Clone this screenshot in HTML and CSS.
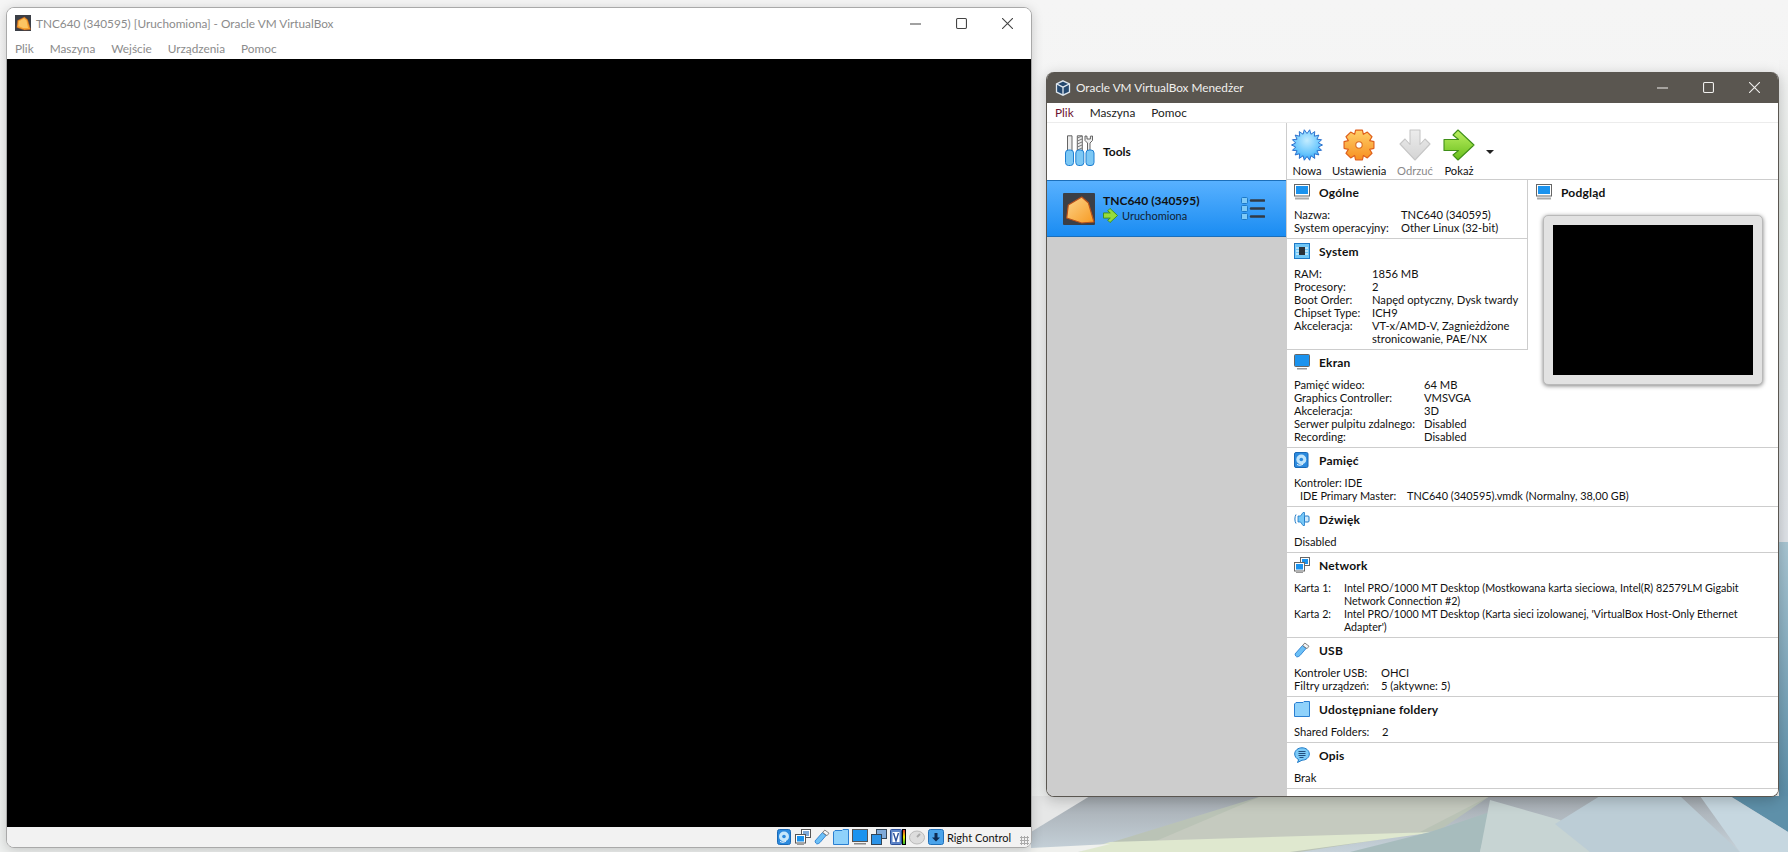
FILE: index.html
```html
<!DOCTYPE html>
<html lang="pl">
<head>
<meta charset="utf-8">
<title>Oracle VM VirtualBox</title>
<link rel="stylesheet" href="styles.css">
</head>
<body>
<svg class="wallpaper" viewBox="0 0 1788 852" aria-hidden="true">
  <defs>
    <linearGradient id="wp" x1="0" y1="0" x2="0" y2="1">
      <stop offset="0" stop-color="#f5f5f5"/><stop offset="1" stop-color="#eef0ef"/>
    </linearGradient>
    <linearGradient id="shade" x1="0" y1="0" x2="0" y2="1">
      <stop offset="0" stop-color="#a4aab0"/><stop offset="1" stop-color="#c6d2da"/>
    </linearGradient>
    <linearGradient id="teal" x1="0" y1="0" x2="0" y2="1">
      <stop offset="0" stop-color="#a9c6d3"/><stop offset="1" stop-color="#5b8ea8"/>
    </linearGradient>
    <linearGradient id="paleg" x1="0" y1="0" x2="0" y2="1">
      <stop offset="0" stop-color="#f3f3f3"/><stop offset=".3" stop-color="#e4eae6"/><stop offset="1" stop-color="#dfe3e8"/>
    </linearGradient>
  </defs>
  <rect width="1788" height="852" fill="url(#wp)"/>
  <rect x="1779" y="60" width="9" height="482" fill="url(#paleg)"/>
  <rect x="1779" y="542" width="9" height="258" fill="url(#teal)"/>
  <rect x="1031" y="796" width="757" height="56" fill="url(#shade)"/>
  <polygon points="1031,796 1090,796 1031,832" fill="#e6e7e7"/>
  <polygon points="1262,796 1490,796 1440,830 1300,852 1080,852" fill="#bac3b6"/>
  <polygon points="1262,796 1490,796 1420,832 1210,852 1130,852" fill="#c5cabf"/>
  <polygon points="1078,852 1110,842 1436,832 1290,852" fill="#dfe8cf"/>
  <polygon points="1031,852 1031,848 1110,844 1078,852" fill="#f0f1ee"/>
  <polygon points="1490,812 1480,852 1350,852 1430,832" fill="#a7bcbd"/>
  <polygon points="1490,800 1480,852 1590,852 1560,820" fill="#c7d4d3"/>
  <polygon points="1590,852 1555,824 1600,796 1680,796 1740,852" fill="#bccdd6"/>
  <polygon points="1730,796 1788,796 1788,832" fill="#5e90a9"/>
  <polygon points="1740,852 1700,796 1730,796 1788,832 1788,852" fill="#c6d7e0"/>
</svg>

<section class="window vm-window">
  <header class="titlebar">
    <svg class="title-icon" viewBox="0 0 32 32" aria-hidden="true"><rect width="32" height="32" fill="#3b3f46"/><path d="M3.700 25 5.300 11 18.700 4 25.300 9.700 31 29 18.700 30z" fill="#f6a12f" stroke="#b9501a"/><path d="M7 22 8 12.500 18 7 23 11 26 26 16 26z" fill="#fcc463"/></svg>
    <span class="title-text">TNC640 (340595) [Uruchomiona] - Oracle VM VirtualBox</span>
    <div class="window-controls dim">
      <svg viewBox="0 0 10 10" aria-hidden="true"><path d="M0 5.500h10"/></svg>
      <svg viewBox="0 0 10 10" aria-hidden="true"><rect x=".5" y=".5" width="9" height="9" rx="1"/></svg>
      <svg viewBox="0 0 10 10" aria-hidden="true"><path d="M0 0 10 10M10 0 0 10"/></svg>
    </div>
  </header>
  <nav class="menubar vm-menu">
    <span>Plik</span><span>Maszyna</span><span>Wejście</span><span>Urządzenia</span><span>Pomoc</span>
  </nav>
  <div class="guest-screen"></div>
  <footer class="statusbar">
    <svg class="st" viewBox="0 0 16 16"><rect x="1.500" y=".5" width="13" height="15" rx="2" fill="#2b8ade" stroke="#1a69b6"/><circle cx="8" cy="7.500" r="5" fill="#c6e7fb"/><circle cx="8" cy="7.500" r="1.800" fill="#2b8ade"/><path d="M4 12.500c2 1 4 1 6-.5" stroke="#fff" fill="none"/></svg>
    <svg class="st" viewBox="0 0 16 16"><rect x="6.500" y=".5" width="9" height="8" fill="#fff" stroke="#555"/><rect x="8" y="2" width="6" height="5" fill="#7fa9d8"/><rect x=".5" y="5.500" width="10" height="8.500" fill="#fff" stroke="#555"/><rect x="2" y="7" width="7" height="5.500" fill="#1b93ee"/><path d="M2 15.500h7" stroke="#999"/></svg>
    <svg class="st" viewBox="0 0 16 16"><path d="M1 12 8.500 3.500l3.500 3L6 13.500Q2 17 1 12z" fill="#6cc0f6" stroke="#2a7fd1" stroke-width=".9"/><path d="M10.800 1 15 4.200 13 6.700 8.700 3.500z" fill="#f4f4f4" stroke="#666" stroke-width=".8"/></svg>
    <svg class="st" viewBox="0 0 16 16"><path d="M.5 3 2 1.500h7L10 .5h5.500v15H.5z" fill="#8fd2fb" stroke="#2a7fd1"/></svg>
    <svg class="st" viewBox="0 0 16 16"><rect x=".5" y=".5" width="15" height="12" fill="#1b93ee" stroke="#555"/><path d="M2 14h12v1.500H2z" fill="#888"/></svg>
    <svg class="st" viewBox="0 0 16 16"><rect x="5.500" y=".5" width="10" height="9" fill="#7fa9d8" stroke="#345"/><rect x=".5" y="5.500" width="10" height="10" fill="#2a93e8" stroke="#345"/></svg>
    <span class="st-vbox">
      <svg class="st" viewBox="0 0 12 16"><rect x=".5" y=".5" width="11" height="15" rx="1" fill="#5d85c9" stroke="#2c4f9a"/><rect x="2.500" y="3" width="7" height="10" fill="#fff"/><path d="M3.500 4 6 12l2.500-8" fill="none" stroke="#2c4f9a" stroke-width="1.400"/></svg>
      <span class="meter"></span>
    </span>
    <svg class="st" viewBox="0 0 16 16"><ellipse cx="8" cy="8.500" rx="7.500" ry="6.500" fill="#ddd" stroke="#bbb"/><path d="m8 8 3-3" stroke="#aaa" stroke-width="2"/></svg>
    <svg class="st" viewBox="0 0 16 16"><rect x=".5" y=".5" width="15" height="15" rx="2" fill="#4aa3ea" stroke="#1f6fb8"/><path d="M8 12.500 4 8.500h2.500V4h3v4.500H12z" fill="#0d2a52"/></svg>
    <span class="host-key">Right Control</span>
    <span class="grip"></span>
  </footer>
</section>

<section class="window mgr-window">
  <header class="titlebar mgr-title">
    <svg class="mgr-logo" viewBox="0 0 16 16" aria-hidden="true"><path d="M8 .8 14.500 4v8L8 15.200 1.500 12V4z" fill="#24486f" stroke="#dfe7ee" stroke-width="1.300"/><path d="M1.800 4 8 7.200 14.200 4M8 7.200V15" fill="none" stroke="#dfe7ee" stroke-width="1.300"/></svg>
    <span class="title-text light">Oracle VM VirtualBox Menedżer</span>
    <div class="window-controls">
      <svg viewBox="0 0 10 10" aria-hidden="true"><path d="M0 5.500h10"/></svg>
      <svg viewBox="0 0 10 10" aria-hidden="true"><rect x=".5" y=".5" width="9" height="9" rx="1"/></svg>
      <svg viewBox="0 0 10 10" aria-hidden="true"><path d="M0 0 10 10M10 0 0 10"/></svg>
    </div>
  </header>
  <nav class="menubar mgr-menu">
    <span class="accent">Plik</span><span>Maszyna</span><span>Pomoc</span>
  </nav>
  <div class="mgr-body">
    <aside class="sidebar">
      <div class="tools-row">
        <svg class="tools-icon" viewBox="0 0 30 31" aria-hidden="true">
          <g fill="#ececec" stroke="#555" stroke-width=".9"><path d="M2.500.8h4.500v15H2.500z"/><path d="M12.300.8h5v15h-5z"/><path d="M22.500 15.500V8L20 5.500V1l2 .2V4h3.400V1.200L27.500 1v4.500L25 8v7.500z"/></g>
          <path d="M12.500 3l4.500-2M12.500 6l4.500-2M12.500 9l4.500-2M12.500 12l4.500-2M12.500 15l4.500-2" stroke="#777"/>
          <g fill="#7cc8f5" stroke="#1f7fd1"><rect x=".5" y="15" width="8" height="15.500" rx="3"/><rect x="10.800" y="15" width="8" height="15.500" rx="3"/><rect x="21" y="15" width="8" height="15.500" rx="3"/></g>
        </svg>
        <span class="tools-label">Tools</span>
      </div>
      <div class="vm-item">
        <svg class="vm-thumb" viewBox="0 0 32 32" aria-hidden="true"><defs><linearGradient id="blob" x1="0" y1="0" x2="1" y2="1"><stop offset="0" stop-color="#fdd48a"/><stop offset="1" stop-color="#f79a22"/></linearGradient></defs><rect width="32" height="32" rx="1" fill="#3b3f46"/><path d="M3.700 25 5.300 12 18.700 4 25.300 9.700 31 29 18.700 30z" fill="url(#blob)" stroke="#b9501a" stroke-width="1.200" stroke-linejoin="round"/></svg>
        <div class="vm-text">
          <div class="vm-name">TNC640 (340595)</div>
          <div class="vm-state">
            <svg class="state-arrow" viewBox="0 0 32 32" aria-hidden="true"><path d="M15 1 31 16 15 31 10 26 15.500 21.500H1V10.500H15.500L10 6z" fill="#96dc3c" stroke="#3f8f18" stroke-width="2"/></svg>
            <span>Uruchomiona</span>
          </div>
        </div>
        <svg class="vm-menu-icon" viewBox="0 0 24 24" aria-hidden="true">
          <g fill="#7fcaf7" stroke="#1d79c7"><rect x=".5" y=".5" width="6" height="6" rx="1"/><rect x=".5" y="8.500" width="6" height="6" rx="1"/><rect x=".5" y="16.500" width="6" height="6" rx="1"/></g>
          <path d="M10 3.500h13M10 11.500h13M10 19.500h13" stroke="#333a44" stroke-width="2.600" stroke-linecap="round"/>
        </svg>
      </div>
    </aside>
    <main class="content">
      <div class="toolbar">
        <button class="tool">
          <svg viewBox="0 0 32 32" aria-hidden="true"><defs><radialGradient id="star" cx=".5" cy=".35" r=".7"><stop offset="0" stop-color="#c2ecff"/><stop offset=".6" stop-color="#6cc8fd"/><stop offset="1" stop-color="#2b9bf4"/></radialGradient></defs><polygon points="31.500,16 27.330,18 30.570,21.300 25.960,21.750 27.870,25.960 23.390,24.810 23.750,29.420 19.930,26.810 18.690,31.260 16,27.500 13.310,31.260 12.070,26.810 8.250,29.420 8.610,24.810 4.130,25.960 6.040,21.750 1.430,21.300 4.670,18 .5,16 4.670,14 1.430,10.700 6.040,10.250 4.130,6.040 8.610,7.190 8.250,2.580 12.070,5.190 13.310,.74 16,4.500 18.690,.74 19.930,5.190 23.750,2.580 23.390,7.190 27.870,6.040 25.960,10.250 30.570,10.700 27.330,14" fill="url(#star)" stroke="#1f66c8" stroke-width=".9"/></svg>
          <span>Nowa</span>
        </button>
        <button class="tool">
          <svg viewBox="1 0 30 30" aria-hidden="true"><defs><linearGradient id="gear" x1="0" y1="0" x2="0" y2="1"><stop offset="0" stop-color="#ffd06a"/><stop offset="1" stop-color="#f78f1f"/></linearGradient></defs><path d="M12.800 1h6.400l.9 4 3.700-2.100 4.400 4.400-2.200 3.600 4 1v6.200l-4 1 2.200 3.600-4.400 4.400-3.700-2.200-.9 4h-6.400l-.9-4-3.700 2.200-4.400-4.400 2.200-3.600-4-1v-6.200l4-1-2.200-3.600 4.400-4.400 3.700 2.100z" fill="url(#gear)" stroke="#df5f1a" stroke-width="1.100" stroke-linejoin="round"/><circle cx="16" cy="15" r="3" fill="#fff" stroke="#d8691f"/></svg>
          <span>Ustawienia</span>
        </button>
        <button class="tool off">
          <svg viewBox="0 0 32 32" aria-hidden="true"><defs><linearGradient id="gray" x1="0" y1="0" x2="0" y2="1"><stop offset="0" stop-color="#ececec"/><stop offset="1" stop-color="#d4d4d4"/></linearGradient></defs><path d="M11 1h10v14.500l5-5.500 5 5L16 31 1 15l5-5 5 5.500z" fill="url(#gray)" stroke="#c6c6c6" stroke-width="1.100" stroke-linejoin="round"/></svg>
          <span>Odrzuć</span>
        </button>
        <button class="tool">
          <svg viewBox="0 0 32 32" aria-hidden="true"><defs><linearGradient id="grn" x1="0" y1="0" x2="0" y2="1"><stop offset="0" stop-color="#bdf062"/><stop offset="1" stop-color="#68be1c"/></linearGradient></defs><path d="M15 1 31 16 15 31 10 26 15.500 21.500H1V10.500H15.500L10 6z" fill="url(#grn)" stroke="#3f8f18" stroke-width="1.100" stroke-linejoin="round"/></svg>
          <span>Pokaż</span>
        </button>
        <span class="caret"></span>
      </div>
      <div class="details">
        <div class="top-grid">
          <div class="left-col">
            <section class="sec boxed">
              <h3 class="sec-head"><svg viewBox="0 0 16 16" aria-hidden="true"><rect x=".5" y=".5" width="15" height="11.500" fill="#fff" stroke="#666"/><rect x="2" y="2" width="12" height="8" fill="#1b93ee"/><path d="M1 13.500h14v2H1z" fill="#aaa"/></svg>Ogólne</h3>
              <dl class="kv kv-gen"><dt>Nazwa:</dt><dd>TNC640 (340595)</dd><dt>System operacyjny:</dt><dd>Other Linux (32-bit)</dd></dl>
            </section>
            <section class="sec boxed">
              <h3 class="sec-head"><svg viewBox="0 0 16 16" aria-hidden="true"><rect x=".5" y=".5" width="15" height="15" fill="#6ec6f7" stroke="#1d79c7"/><rect x="5" y="4" width="6" height="8" fill="#2b3138"/><path d="M2 5h3M2 8h3M2 11h3M11 5h3M11 8h3M11 11h3" stroke="#fff"/></svg>System</h3>
              <dl class="kv kv-sys"><dt>RAM:</dt><dd>1856 MB</dd><dt>Procesory:</dt><dd>2</dd><dt>Boot Order:</dt><dd>Napęd optyczny, Dysk twardy</dd><dt>Chipset Type:</dt><dd>ICH9</dd><dt>Akceleracja:</dt><dd>VT-x/AMD-V, Zagnieżdżone<br>stronicowanie, PAE/NX</dd></dl>
            </section>
            <section class="sec">
              <h3 class="sec-head"><svg viewBox="0 0 16 16" aria-hidden="true"><rect x=".5" y=".5" width="15" height="12" rx="1" fill="#1b93ee" stroke="#666"/><path d="M3 14h10v1.500H3z" fill="#999"/></svg>Ekran</h3>
              <dl class="kv kv-scr"><dt>Pamięć wideo:</dt><dd>64 MB</dd><dt>Graphics Controller:</dt><dd>VMSVGA</dd><dt>Akceleracja:</dt><dd>3D</dd><dt>Serwer pulpitu zdalnego:</dt><dd>Disabled</dd><dt>Recording:</dt><dd>Disabled</dd></dl>
            </section>
          </div>
          <div class="preview">
            <h3 class="sec-head"><svg viewBox="0 0 16 16" aria-hidden="true"><rect x=".5" y=".5" width="15" height="11.500" fill="#fff" stroke="#666"/><rect x="2" y="2" width="12" height="8" fill="#1b93ee"/><path d="M1 13.500h14v2H1z" fill="#aaa"/></svg>Podgląd</h3>
            <div class="monitor"><div class="monitor-screen"></div></div>
          </div>
        </div>
        <section class="sec full">
          <h3 class="sec-head"><svg viewBox="0 0 16 16" aria-hidden="true"><rect x=".5" y=".5" width="13.500" height="15" rx="1.500" fill="#2b8ade" stroke="#1a69b6"/><circle cx="7.300" cy="7.500" r="5" fill="#bfe4fb"/><circle cx="7.300" cy="7.500" r="1.800" fill="#2b8ade"/><path d="M3 12.500c2 1 4 1 6-.5" stroke="#fff" fill="none"/></svg>Pamięć</h3>
          <dl class="kv kv-ide"><dt class="span">Kontroler: IDE</dt><dt class="indent">IDE Primary Master:</dt><dd>TNC640 (340595).vmdk (Normalny, 38,00 GB)</dd></dl>
        </section>
        <section class="sec full">
          <h3 class="sec-head"><svg viewBox="0 0 16 16" aria-hidden="true"><path d="M2 3.500C.5 6 .5 10 2 12.500" fill="none" stroke="#1d79c7"/><path d="M4 5h2.500L9 1.500h1.500v13H9L6.500 11H4z" fill="#77c8f7" stroke="#1d79c7" stroke-width=".8"/><rect x="10.500" y="5" width="4.500" height="6" rx="1" fill="#cfeafc" stroke="#1d79c7"/></svg>Dźwięk</h3>
          <dl class="kv"><dt>Disabled</dt></dl>
        </section>
        <section class="sec full">
          <h3 class="sec-head"><svg viewBox="0 0 16 16" aria-hidden="true"><rect x="6.500" y=".5" width="9" height="8" fill="#fff" stroke="#666"/><rect x="8" y="2" width="6" height="5" fill="#1b93ee"/><rect x=".5" y="5.500" width="10" height="8.500" fill="#fff" stroke="#666"/><rect x="2" y="7" width="7" height="5.500" fill="#1b93ee"/><path d="M2 15.500h7" stroke="#999"/></svg>Network</h3>
          <dl class="kv kv-net"><dt>Karta 1:</dt><dd>Intel PRO/1000 MT Desktop (Mostkowana karta sieciowa, Intel(R) 82579LM Gigabit<br>Network Connection #2)</dd><dt>Karta 2:</dt><dd>Intel PRO/1000 MT Desktop (Karta sieci izolowanej, 'VirtualBox Host-Only Ethernet<br>Adapter')</dd></dl>
        </section>
        <section class="sec full">
          <h3 class="sec-head"><svg viewBox="0 0 16 16" aria-hidden="true"><path d="M1 12 8.500 3.500l3.500 3L6 13.500Q2 17 1 12z" fill="#6cc0f6" stroke="#2a7fd1" stroke-width=".9"/><path d="M10.800 1 15 4.200 13 6.700 8.700 3.500z" fill="#f4f4f4" stroke="#666" stroke-width=".8"/></svg>USB</h3>
          <dl class="kv kv-usb"><dt>Kontroler USB:</dt><dd>OHCI</dd><dt>Filtry urządzeń:</dt><dd>5 (aktywne: 5)</dd></dl>
        </section>
        <section class="sec full">
          <h3 class="sec-head"><svg viewBox="0 0 16 16" aria-hidden="true"><path d="M.5 3 2 1.500h7L10 .5h5.500v15H.5z" fill="#8fd2fb" stroke="#2a7fd1"/></svg>Udostępniane foldery</h3>
          <dl class="kv kv-shr"><dt>Shared Folders:</dt><dd>2</dd></dl>
        </section>
        <section class="sec full">
          <h3 class="sec-head"><svg viewBox="0 0 16 16" aria-hidden="true"><path d="M8 .8C4 .8.7 3.400.7 7c0 2.500 1.600 4.600 4 5.600L3.500 15.500 8 13.200c4 0 7.300-2.600 7.300-6.200S12 .8 8 .8z" fill="#7ccbf8" stroke="#1d79c7"/><path d="M4.500 4.500h7M4.500 6.500h7M4.500 8.500h7M5.500 10.500h4" stroke="#17406e" stroke-width=".9"/></svg>Opis</h3>
          <dl class="kv"><dt>Brak</dt></dl>
        </section>
      </div>
    </main>
  </div>
</section>
</body>
</html>
```

FILE: styles.css
```css
* { box-sizing: border-box; }
html, body { margin: 0; padding: 0; width: 1788px; height: 852px; overflow: hidden; }
body {
  position: relative;
  font-family: Lato, Roboto, "Noto Sans", sans-serif;
  font-size: 11.800px;
  color: #111;
  background: #f3f3f3;
}
.wallpaper { position: absolute; inset: 0; width: 1788px; height: 852px; }
.window { position: absolute; display: flex; flex-direction: column; overflow: hidden; background: #fff; }
.vm-window {
  left: 6px; top: 7px; width: 1026px; height: 841px;
  border: 1px solid #a9a9a9; border-radius: 8px;
  box-shadow: 0 2px 12px rgba(0,0,0,.18);
}
.mgr-window {
  left: 1046px; top: 72px; width: 733px; height: 725px;
  border: 1px solid #5a5650; border-top: 0; border-radius: 8px;
  box-shadow: 0 3px 14px rgba(0,0,0,.22);
}
.titlebar { flex: none; display: flex; align-items: center; height: 30px; padding-left: 8px; background: #fff; }
.mgr-title { height: 31px; background: #5a5650; }
.title-icon { width: 16px; height: 16px; margin-right: 5px; }
.mgr-logo { width: 16px; height: 16px; margin-right: 5px; }
.title-text { font-size: 11.800px; color: #8b8b8b; }
.title-text.light { color: #f1f0ee; }
.window-controls { margin-left: auto; display: flex; align-items: center; gap: 35px; padding-right: 18px; }
.window-controls svg { width: 11px; height: 11px; fill: none; stroke: #f1f0ee; stroke-width: 1; }
.window-controls.dim svg { stroke: #444; }
.menubar { flex: none; display: flex; gap: 16px; align-items: center; padding-left: 8px; background: #fff; }
.vm-menu { color: #8b8b8b; height: 21px; }
.mgr-menu { color: #222; height: 20px; border-bottom: 1px solid #ececec; }
.accent { color: #6d1230; }
.guest-screen { flex: 1; background: #000; }
.statusbar {
  flex: none; height: 20px; display: flex; align-items: center; justify-content: flex-end;
  gap: 3px; padding-right: 20px; background: #f2f2f2; position: relative; color: #111;
}
.host-key { font-size: 11px; }
.st { width: 16px; height: 16px; flex: none; }
.st-vbox { display: flex; align-items: center; }
.st-vbox .st { width: 12px; }
.meter { width: 4px; height: 16px; background: linear-gradient(#d33, #ee0 50%, #3b3); border: 1px solid #000; }
.grip { position: absolute; right: 2px; bottom: 2px; width: 9px; height: 9px; background: radial-gradient(circle, #aaa 1px, transparent 1.200px) 0 0 / 3px 3px; }
.mgr-body { flex: 1; display: flex; min-height: 0; background: #cdcdcd; }
.sidebar { flex: none; width: 239px; display: flex; flex-direction: column; }
.tools-row { flex: none; height: 57px; background: #fff; display: flex; align-items: center; padding: 0 0 2px 18px; gap: 8px; }
.tools-icon { width: 30px; height: 31px; }
.tools-label { font-weight: 700; font-size: 12px; padding-top: 1px; }
.vm-item {
  flex: none; height: 57px; display: flex; align-items: center; padding-left: 16px;
  background: linear-gradient(#58b1ff, #1a8cf2); border-top: 1px solid #1c6fba; border-bottom: 1px solid #1c6fba;
}
.vm-thumb { width: 32px; height: 32px; margin-right: 8px; }
.vm-text { width: 138px; }
.vm-name { font-weight: 700; font-size: 12px; line-height: 15px; margin-top: -1px; }
.vm-state { display: flex; align-items: center; gap: 4px; line-height: 15px; font-size: 11px; color: #123; }
.state-arrow { width: 15px; height: 15px; }
.vm-menu-icon { width: 24px; height: 24px; }
.content { flex: 1; display: flex; flex-direction: column; min-width: 0; background: #fff; border-left: 1px solid #cdcdcd; }
.toolbar {
  flex: none; height: 57px; display: grid; grid-template-columns: 41px 65px 46px 40px auto;
  align-items: start; justify-items: start; padding: 6px 0 0 4px; border-bottom: 1px solid #cdcdcd;
}
.tool { all: unset; display: flex; flex-direction: column; align-items: center; min-width: 31px; line-height: 15px; gap: 2px; font-size: 11.200px; }
.tool svg { width: 32px; height: 32px; }
.tool.off { color: #8a8a8a; }
.caret { margin-top: 21px; margin-left: 3px; width: 0; height: 0; border: 4px solid transparent; border-top: 4px solid #222; border-bottom: 0; }
.details { flex: 1; display: flex; flex-direction: column; min-height: 0; overflow: hidden; }
.top-grid { flex: none; display: flex; border-bottom: 1px solid #cdcdcd; }
.left-col { flex: none; width: 241px; }
.sec-head { margin: 0; height: 25px; padding-bottom: 1px; display: flex; align-items: center; gap: 9px; font-size: 12px; font-weight: 700; color: #111; letter-spacing: .2px; }
.sec-head svg { width: 16px; height: 16px; flex: none; }
.sec { padding: 0 7px 0; }
.sec.boxed { border-right: 1px solid #cdcdcd; border-bottom: 1px solid #cdcdcd; }
.sec.full { border-bottom: 1px solid #cdcdcd; }
.kv { margin: 0; padding: 3px 0 4px; display: grid; line-height: 13px; font-size: 11.200px; }
.kv dt, .kv dd { margin: 0; white-space: nowrap; }
.kv-gen { grid-template-columns: 107px 1fr; }
.kv-sys { grid-template-columns: 78px 1fr; }
.kv-scr { grid-template-columns: 130px 1fr; }
.kv-net { grid-template-columns: 50px 1fr; font-size: 10.700px; }
.kv-usb { grid-template-columns: 87px 1fr; }
.kv-shr { grid-template-columns: 88px 1fr; }
.kv-ide { grid-template-columns: 113px 1fr; font-size: 10.900px; }
.span { grid-column: 1 / -1; }
.indent { padding-left: 6px; }
.preview { flex: 1; padding-left: 8px; }
.monitor {
  margin: 10px 0 0 7px; width: 220px; height: 170px; padding: 9px;
  background: #e2e2e2; border: 1px solid #b9b9b9; border-radius: 5px; box-shadow: 0 1px 4px rgba(0,0,0,.5);
}
.monitor-screen { width: 200px; height: 150px; background: #000; }
```
